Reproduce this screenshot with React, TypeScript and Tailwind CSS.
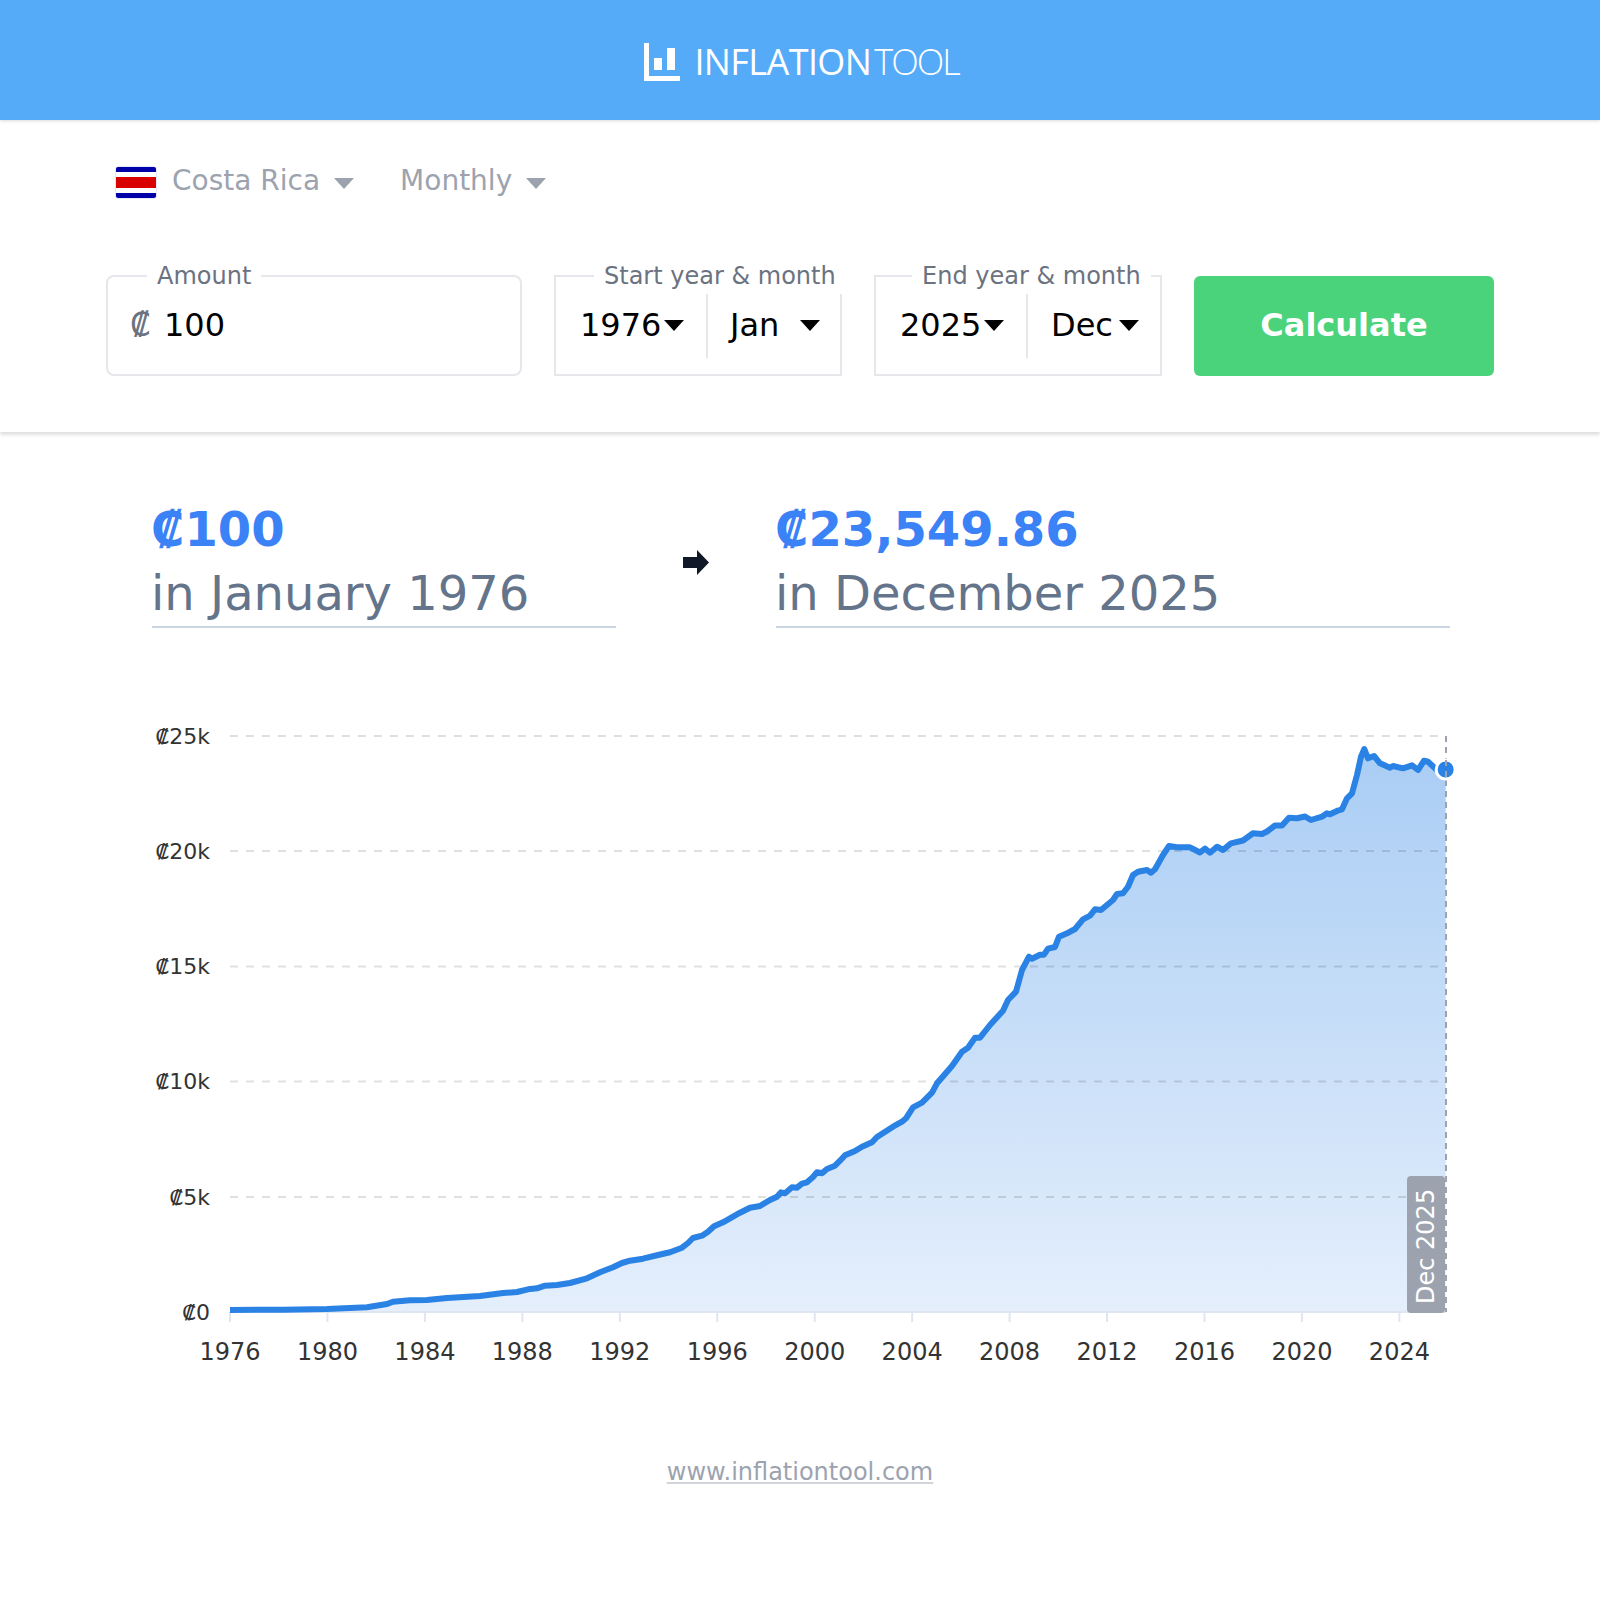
import React from 'react';

const DEJAVU = "font-['DejaVu_Sans',sans-serif]";

// traced from the chart, in page pixels
const LINE: [number, number][] = [
  [230, 1310], [283, 1309.7], [327, 1309], [367, 1307.3], [387, 1304], [393, 1301.7], [410, 1300.3], [427, 1300],
  [447, 1298], [480, 1296], [503, 1293], [517, 1292], [528, 1289.3], [537, 1288.3], [545, 1285.7], [557, 1285],
  [570, 1283], [587, 1278.3], [600, 1272.3], [613, 1267.3], [622, 1263], [630, 1260.7], [643, 1258.7], [658, 1255],
  [670, 1252.3], [682, 1247.7], [688, 1243], [693, 1238], [702, 1235.7], [708, 1231.7], [714, 1226.3], [723, 1222.3],
  [740, 1212.7], [750, 1207.7], [760, 1206], [770, 1200], [777, 1196.7], [781, 1192.3], [785, 1193.3], [792, 1187.3],
  [797, 1187.7], [802, 1183.7], [807, 1182.3], [813, 1177], [817, 1172.3], [822, 1173.3], [827, 1169], [835, 1165.7],
  [840, 1160.7], [845, 1155.3], [855, 1151], [862, 1146.7], [872, 1142.3], [877, 1137], [893, 1126.7], [902, 1121.7],
  [906, 1118.3], [913, 1107.3], [922, 1102.7], [932, 1092.7], [937, 1083.3], [952, 1066], [962, 1051.7], [968, 1047.7],
  [975, 1037.7], [980, 1037.7], [990, 1025], [1003, 1010.7], [1008, 1000], [1016, 991.7], [1022, 970], [1029, 956.7],
  [1032, 958.7], [1040, 954.7], [1044, 954.7], [1048, 948.7], [1055, 947], [1059, 936.7], [1067, 933.3], [1075, 929],
  [1083, 919.3], [1090, 915.7], [1095, 909.3], [1101, 910], [1113, 900], [1117, 894], [1123, 893.3], [1128, 886.7],
  [1133, 875], [1138, 871.7], [1147, 870], [1151, 872.7], [1155, 869.3], [1163, 855], [1169, 846], [1177, 847.3],
  [1190, 847.3], [1200, 852.5], [1205, 848.5], [1210, 852.7], [1217, 846.7], [1223, 850], [1231, 843.3], [1243, 840.5],
  [1253, 833.3], [1262, 834], [1267, 831.5], [1275, 825.5], [1282, 825.5], [1289, 817.7], [1297, 818.3], [1305, 816.5],
  [1311, 820], [1322, 816.7], [1327, 813.3], [1330, 814.3], [1338, 810.5], [1342, 809.3], [1347, 798.3], [1352, 793.3],
  [1357, 775], [1361, 756.7], [1364.3, 749], [1368, 758.3], [1374, 756], [1380, 763.3], [1390, 767.7], [1393, 766],
  [1403, 768.3], [1412, 765.3], [1418, 770], [1424, 760.7], [1428, 761.7], [1437, 770], [1445.7, 769.3],
];

const linePath = LINE.map(([x, y], i) => `${i === 0 ? 'M' : 'L'}${x} ${y}`).join(' ');
const areaPath = `${linePath} L1445.7 1312 L230 1312 Z`;

const Y_TICKS: [string, number][] = [
  ['₡25k', 736], ['₡20k', 851], ['₡15k', 966.5], ['₡10k', 1081.5], ['₡5k', 1197], ['₡0', 1312],
];
const X_YEARS = [1976, 1980, 1984, 1988, 1992, 1996, 2000, 2004, 2008, 2012, 2016, 2020, 2024];

const Caret: React.FC<{ className: string }> = ({ className }) => (
  <svg viewBox="0 0 20 11" className={`w-5 h-[11px] shrink-0 ${className}`}>
    <path d="M0 0H20L10 11Z" fill="currentColor" />
  </svg>
);

const DateField: React.FC<{
  label: string; year: string; month: string; legendClass: string; yearClass: string; monthClass: string;
}> = ({ label, year, month, legendClass, yearClass, monthClass }) => (
  <fieldset className="w-[288px] min-w-0 border-2 border-[#e5e7eb] pb-4 flex-none">
    <legend className={`px-2.5 text-2xl leading-[36px] text-[#6b7280] whitespace-nowrap ${legendClass}`}>{label}</legend>
    <div className="flex h-[64px] text-[32px] text-black">
      <div className={`w-[152px] pb-0.5 flex items-center justify-between border-r-2 border-[#e5e7eb] ${yearClass}`}>
        <span>{year}</span>
        <Caret className="text-black" />
      </div>
      <div className={`flex-1 pb-0.5 flex items-center justify-between ${monthClass}`}>
        <span>{month}</span>
        <Caret className="text-black" />
      </div>
    </div>
  </fieldset>
);

export default function App() {
  return (
    <div className={`min-h-[1600px] bg-white ${DEJAVU}`}>
      <header className="h-[120px] bg-[#56abf9] shadow-[0_1px_3px_rgba(0,0,0,0.15)] flex items-center justify-center">
        <div className="flex items-center gap-[14px] pt-1 ml-[3px]">
          <svg viewBox="0 0 36 38" className="w-9 h-[38px]">
            <path d="M0 0H5V33H36V38H0Z" fill="#fff" />
            <rect x="10" y="15" width="8" height="12" fill="#fff" />
            <rect x="23" y="5" width="8" height="22" fill="#fff" />
          </svg>
          <div className="font-['Open_Sans',sans-serif] text-[36px] leading-none text-white tracking-[-0.6px]">
            <span className="font-normal">INFLATION</span>
            <span className="font-light ml-[3px] tracking-[-2px]">TOOL</span>
          </div>
        </div>
      </header>

      <section className="h-[312px] shadow-[0_3px_3px_rgba(0,0,0,0.12)] flex flex-col">
        <div className="flex items-center h-[34px] mt-[45px] pl-[115px] text-[28px] text-[#9ca3af]">
          <div className="w-[42px] h-[33px] flex flex-col rounded-[3px] border border-[#e5e7ff] overflow-hidden shrink-0">
            <div className="h-[5px] bg-[#0000a8]" />
            <div className="h-[5px] bg-white" />
            <div className="flex-1 bg-[#d90000]" />
            <div className="h-[5px] bg-white" />
            <div className="h-[5px] bg-[#0000a8]" />
          </div>
          <span className="ml-[15px] mb-0.5">Costa Rica</span>
          <Caret className="ml-[14px] mt-[3px] text-[#9ca3af]" />
          <span className="ml-[46px] mb-0.5">Monthly</span>
          <Caret className="ml-[14px] mt-[3px] text-[#9ca3af]" />
        </div>

        <div className="flex items-end gap-8 px-[106px] mt-[59px]">
          <fieldset className="flex-1 min-w-0 border-2 border-[#e5e7eb] rounded-lg pb-4 pl-[22px] pr-2.5">
            <legend className="ml-[17px] px-2.5 text-2xl leading-[36px] text-[#6b7280]">Amount</legend>
            <div className="flex items-center h-[64px] pb-0.5 text-[32px]">
              <span className="text-[#6b7280] w-[34px]">₡</span>
              <span className="text-black">100</span>
            </div>
          </fieldset>

          <DateField label="Start year & month" year="1976" month="Jan"
            legendClass="ml-[38px]" yearClass="pl-6 pr-[22px]" monthClass="pl-[22px] pr-[20px]" />
          <DateField label="End year & month" year="2025" month="Dec"
            legendClass="ml-[36px]" yearClass="pl-6 pr-[22px]" monthClass="pl-[23px] pr-[21px]" />

          <button className="w-[300px] h-[100px] shrink-0 rounded-md bg-[#4bd37b] text-white text-[32px] font-bold pb-0.5">
            Calculate
          </button>
        </div>
      </section>

      <section className="flex items-center pl-[152px] pt-[65px]">
        <div className="w-[464px] border-b-2 border-[#cbd5e1] pb-px">
          <div className="text-[48px] leading-[64px] font-bold text-[#3b82f6] -ml-px">₡100</div>
          <div className="text-[48px] leading-[64px] text-[#64748b] -ml-px">in January 1976</div>
        </div>
        <div className="w-[160px] flex justify-center">
          <svg viewBox="0 0 26 25" className="w-[26px] h-[25px] -ml-[1px] mb-px">
            <path d="M0 7H14V0L26 12.5L14 25V18H0Z" fill="#111827" />
          </svg>
        </div>
        <div className="w-[674px] border-b-2 border-[#cbd5e1] pb-px">
          <div className="text-[48px] leading-[64px] font-bold text-[#3b82f6] -ml-px">₡23,549.86</div>
          <div className="text-[48px] leading-[64px] text-[#64748b] -ml-px">in December 2025</div>
        </div>
      </section>

      <svg viewBox="0 700 1600 700" className="block w-[1600px] h-[700px] mt-[72px]">
        <defs>
          <linearGradient id="area" x1="0" y1="736" x2="0" y2="1312" gradientUnits="userSpaceOnUse">
            <stop offset="0" stopColor="#a8ccf4" />
            <stop offset="1" stopColor="#e5effc" />
          </linearGradient>
        </defs>
        <path d={areaPath} fill="url(#area)" />
        {Y_TICKS.slice(0, 5).map(([, y]) => (
          <line key={y} x1="230" x2="1446" y1={y} y2={y} stroke="#000" strokeOpacity="0.12" strokeWidth="2" strokeDasharray="8 8" />
        ))}
        <line x1="230" x2="1446" y1="1312" y2="1312" stroke="#e0e6f1" strokeWidth="2" />
        {X_YEARS.map((yr, i) => {
          const x = 230 + i * 97.45;
          return (
            <g key={yr}>
              <line x1={x} x2={x} y1="1312" y2="1322" stroke="#e0e6f1" strokeWidth="2" />
              <text x={x} y="1360" textAnchor="middle" fontSize="24" fill="#333">{yr}</text>
            </g>
          );
        })}
        {Y_TICKS.map(([label, y]) => (
          <text key={label} x="210" y={y + 7.5} textAnchor="end" fontSize="22" fill="#333">{label}</text>
        ))}
        <line x1="1446" x2="1446" y1="736" y2="1312" stroke="#9ca3af" strokeWidth="2" strokeDasharray="6 5" />
        <rect x="1407" y="1176" width="38" height="137" rx="4" fill="#9ca3af" />
        <text x="0" y="0" transform="translate(1434 1304) rotate(-90)" fontSize="24" fill="#fff">Dec 2025</text>
        <path d={linePath} fill="none" stroke="#2a82e4" strokeWidth="6" strokeLinejoin="round" />
        <circle cx="1445.7" cy="769.5" r="9.5" fill="#2a82e4" stroke="#fff" strokeWidth="3" />
        <line x1="1446" x2="1446" y1="760" y2="780" stroke="#9ca3af" strokeWidth="2" strokeDasharray="6 5" />
      </svg>

      <div className="mt-[56px] text-center">
        <a className="text-2xl text-[#9ca3af] underline decoration-[#d1d5db] decoration-2 underline-offset-[2px]">www.inflationtool.com</a>
      </div>
    </div>
  );
}
